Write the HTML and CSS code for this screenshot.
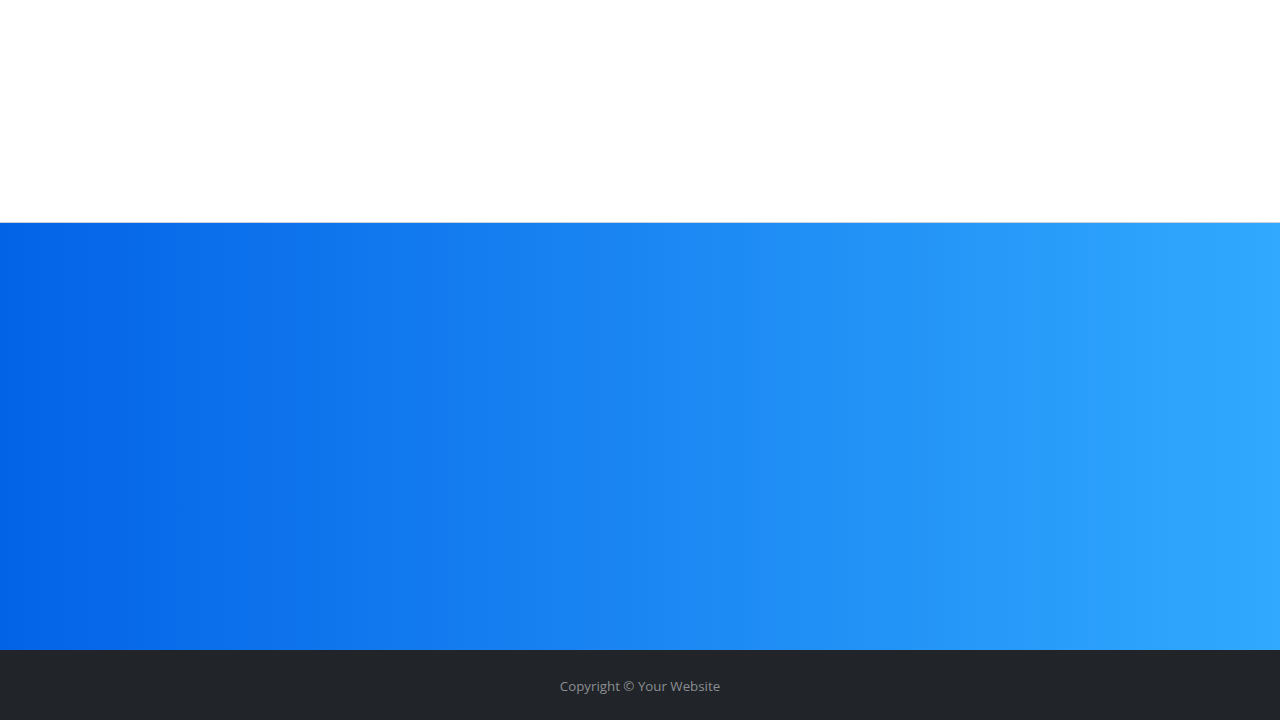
FILE: index.html
```html
<!DOCTYPE html>
<html>
<head>
<meta charset="utf-8">
<link rel="stylesheet" href="styles.css">
</head>
<body>
<header class="top"></header>
<section class="hero"></section>
<footer class="footer"><p class="copy">Copyright &copy; Your Website</p></footer>
</body>
</html>
```
FILE: styles.css
```css
html, body { margin: 0; padding: 0; }
body { font-family: "Open Sans", "Noto Sans", sans-serif; background: #fff; }
.top { height: 222px; background: #fff; border-bottom: 1px solid #c9d3de; }
.hero { height: 427px; background: linear-gradient(to right, #0363E7, #31A9FE); }
.footer { background: #212529; height: 70px; display: flex; align-items: center; justify-content: center; padding-top: 4px; box-sizing: border-box; }
.copy { margin: 0; font-size: 13.3px; color: #8b8e92; line-height: 1.5; }
```
